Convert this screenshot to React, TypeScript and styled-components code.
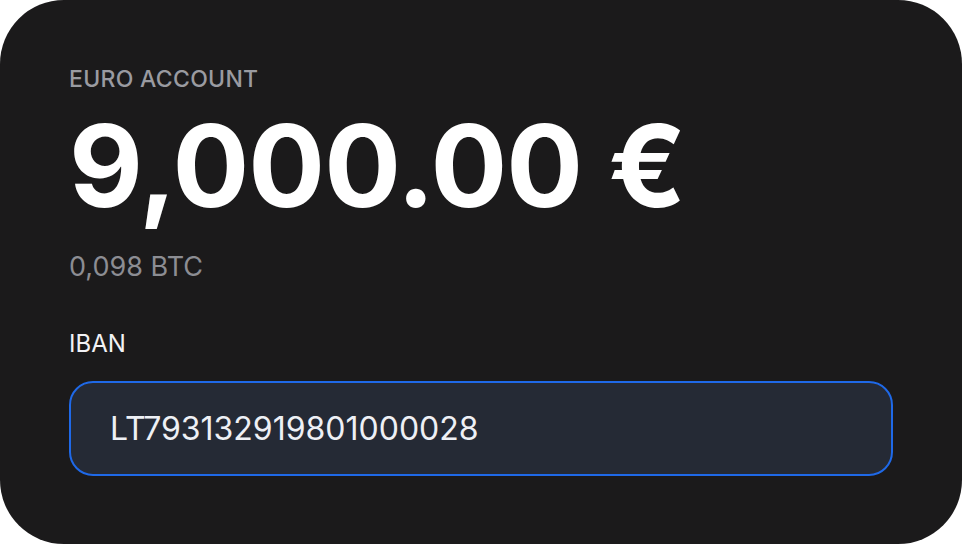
import styled, { createGlobalStyle } from "styled-components";

const GlobalStyle = createGlobalStyle`
  html, body {
    margin: 0;
    padding: 0;
    background: #ffffff;
  }
  body {
    font-family: Inter, "Noto Sans", sans-serif;
  }
`;

const Card = styled.section`
  box-sizing: border-box;
  width: 962px;
  height: 544px;
  padding: 64px 69px 0;
  background: #1b1a1b;
  border-radius: 64px;
  display: flex;
  flex-direction: column;
`;

const Label = styled.div`
  font-size: 23px;
  font-weight: 500;
  line-height: 30px;
  color: #9a9ba1;
  letter-spacing: 0.3px;
`;

const Balance = styled.div`
  margin-top: 12px;
  font-size: 114px;
  font-weight: 700;
  line-height: 120px;
  color: #ffffff;
  letter-spacing: -1px;
`;

const SubAmount = styled.div`
  margin-top: 25px;
  font-size: 27px;
  line-height: 32px;
  color: #8c8d93;
`;

const FieldLabel = styled.div`
  margin-top: 46px;
  font-size: 24px;
  line-height: 30px;
  color: #f2f2f5;
`;

const IbanBox = styled.div`
  box-sizing: border-box;
  margin-top: 22px;
  height: 95px;
  padding: 0 39px;
  display: flex;
  align-items: center;
  background: #252a35;
  border: 2px solid #1f69e8;
  border-radius: 24px;
  font-size: 32px;
  color: #eef0f5;
`;

export default function App() {
  return (
    <>
      <GlobalStyle />
      <Card aria-label="Euro account">
        <Label>EURO ACCOUNT</Label>
        <Balance>9,000.00 €</Balance>
        <SubAmount>0,098 BTC</SubAmount>
        <FieldLabel>IBAN</FieldLabel>
        <IbanBox>LT793132919801000028</IbanBox>
      </Card>
    </>
  );
}
